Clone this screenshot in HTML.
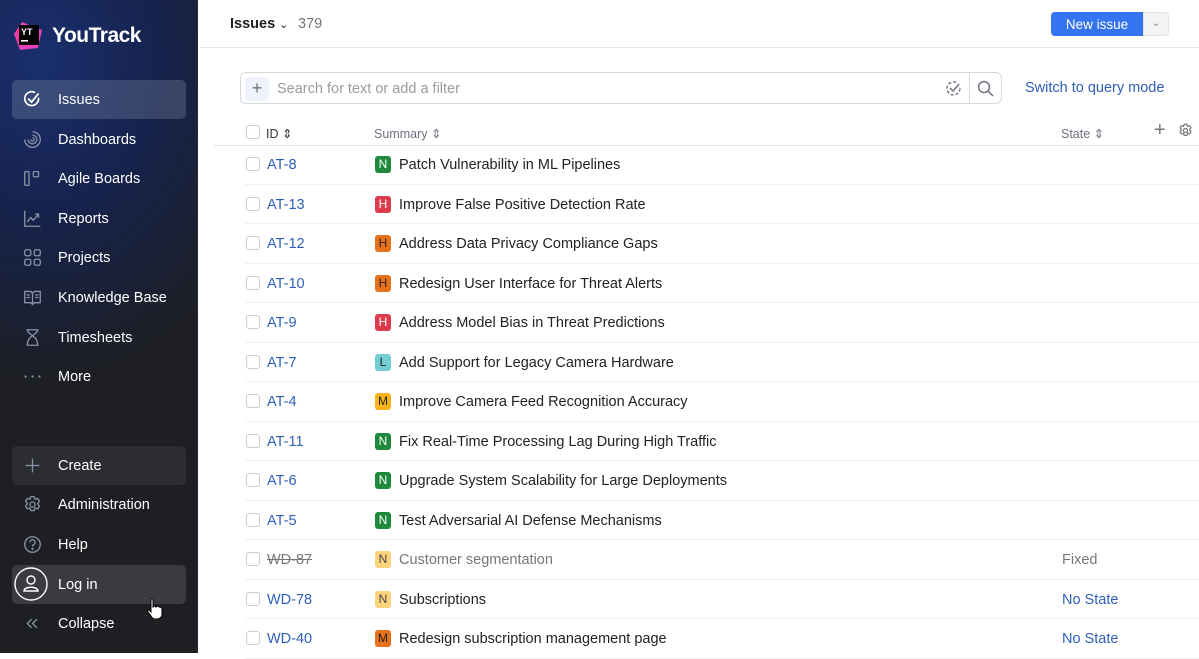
<!DOCTYPE html>
<html><head><meta charset="utf-8"><style>
*{box-sizing:border-box;margin:0;padding:0}
body{width:1199px;height:653px;overflow:hidden;font-family:"Liberation Sans",sans-serif;background:#fff;position:relative}
#sb{position:absolute;left:0;top:0;width:198px;height:653px;background:radial-gradient(ellipse 260px 330px at 40px 60px,#1a2f6e 0%,#16234d 45%,#1e1f22 100%);border-right:1px solid #2b2d30}
.logo{position:absolute;left:12px;top:20px}
.brand{position:absolute;left:52px;top:24px;color:#fff;font-size:21px;font-weight:bold;letter-spacing:-0.5px}
.nav{position:absolute;left:12px;width:174px;height:39px;border-radius:5px;color:#fff;font-size:14.5px;line-height:41px;padding-left:46px}
.nav.act{background:rgba(120,135,160,0.35)}
.nav.cr{background:#2b2d30}
.nav.lg{background:#393b40}
.nav svg{position:absolute;left:11px;top:10px}
#main{position:absolute;left:199px;top:0;right:0;height:653px}
.top{height:48px;border-bottom:1px solid #e6e7ea;position:relative}
.ti{position:absolute;left:31px;top:16px;font-size:14.5px;font-weight:bold;color:#222}
.cnt{position:absolute;left:100px;top:16px;font-size:14.5px;color:#777}
.btn{position:absolute;left:852px;top:12px;width:92px;height:24px;background:#3574f0;color:#fff;border-radius:4px 0 0 4px;font-size:13.5px;text-align:center;line-height:25px}
.btn2{position:absolute;left:944px;top:12px;width:26px;height:24px;background:#f2f3f5;border:1px solid #e3e4e7;border-radius:0 4px 4px 0;color:#888;font-size:10px;text-align:center;line-height:22px}
.search{position:absolute;left:41px;top:72px;width:762px;height:32px;border:1px solid #d6d8dc;border-radius:6px}
.plus{position:absolute;left:4px;top:4px;width:24px;height:24px;background:#eef2fb;border-radius:4px;color:#6b7280;font-size:18px;text-align:center;line-height:23px}
.ph{position:absolute;left:36px;top:8px;color:#9a9ca3;font-size:14.5px}
.sdiv{position:absolute;left:728px;top:0;width:1px;height:30px;background:#d6d8dc}
.sq{position:absolute;left:826px;top:80px;color:#2f5fb8;font-size:14.5px}
.hdr{position:absolute;left:15px;top:120px;width:985px;height:26px;border-bottom:1px solid #dfe1e5;font-size:12.5px;color:#6c707e}
.cb{position:absolute;width:14px;height:14px;border:1px solid #c9ccd1;border-radius:3px;background:#fff}
.row{position:absolute;left:46px;width:954px;height:39.5px;border-bottom:1px solid #eeeff1;font-size:14.5px}
.row .cb{left:1px;top:12px}
.id{position:absolute;left:22px;top:12px;color:#2f5fb8}
.bd{position:absolute;left:130px;top:11px;width:16px;height:17px;border-radius:3px;font-size:12px;text-align:center;line-height:17px}
.sm{position:absolute;left:154px;top:12px;color:#222}
.st{position:absolute;left:817px;top:12px;color:#2f5fb8}
</style></head><body>
<div id="sb">
<svg class="logo" width="32" height="32" viewBox="0 0 32 32"><polygon points="2,14 10,2 30,10 26,28 8,30" fill="#e83fbb"/><polygon points="6,22 4,10 20,6" fill="#ff318c"/><rect x="7" y="5" width="20" height="20" fill="#000"/><text x="9" y="15" fill="#fff" font-size="9" font-weight="bold" font-family="Liberation Sans">YT</text><rect x="9" y="20" width="7" height="1.6" fill="#fff"/></svg>
<div class="brand">YouTrack</div>
<div class="nav act" style="top:80px"><svg width="19" height="19" viewBox="0 0 22 22" fill="none" stroke="#fff" stroke-width="2"><path d="M18 9a8 8 0 1 1-4-6"/><path d="M6 10l4 4 8-10"/></svg>Issues</div>
<div class="nav" style="top:120px"><svg width="19" height="19" viewBox="0 0 22 22" fill="none" stroke="#8a93a8" stroke-width="1.5"><path d="M11 2a9 9 0 1 1-9 9"/><path d="M11 6a5 5 0 1 1-5 5"/><path d="M11 9a2 2 0 1 1-2 2"/></svg>Dashboards</div>
<div class="nav" style="top:159px"><svg width="19" height="19" viewBox="0 0 22 22" fill="none" stroke="#8a93a8" stroke-width="1.5"><rect x="2" y="3" width="5" height="16" rx="1"/><rect x="12" y="3" width="6" height="6" rx="1"/></svg>Agile Boards</div>
<div class="nav" style="top:199px"><svg width="19" height="19" viewBox="0 0 22 22" fill="none" stroke="#8a93a8" stroke-width="1.5"><path d="M2 2v18h18"/><path d="M5 15l4-5 3 3 6-7M14 6h4v4"/></svg>Reports</div>
<div class="nav" style="top:238px"><svg width="19" height="19" viewBox="0 0 22 22" fill="none" stroke="#8a93a8" stroke-width="1.5"><rect x="2" y="2" width="7" height="7" rx="2"/><rect x="13" y="2" width="7" height="7" rx="2"/><rect x="2" y="13" width="7" height="7" rx="2"/><rect x="13" y="13" width="7" height="7" rx="2"/></svg>Projects</div>
<div class="nav" style="top:278px"><svg width="19" height="19" viewBox="0 0 22 22" fill="none" stroke="#8a93a8" stroke-width="1.5"><path d="M2 4h7l2 2 2-2h7v13h-7l-2 2-2-2H2z M11 6v13 M4 8h4M4 11h4M14 8h4M14 11h4"/></svg>Knowledge Base</div>
<div class="nav" style="top:318px"><svg width="19" height="19" viewBox="0 0 22 22" fill="none" stroke="#8a93a8" stroke-width="1.5"><path d="M4 2h14M4 20h14M5 2c0 6 12 6 12 18M17 2c0 6-12 6-12 18"/></svg>Timesheets</div>
<div class="nav" style="top:357px"><svg width="19" height="19" viewBox="0 0 22 22" fill="#8a93a8"><circle cx="3" cy="11" r="1.3"/><circle cx="11" cy="11" r="1.3"/><circle cx="19" cy="11" r="1.3"/></svg>More</div>
<div class="nav cr" style="top:446px"><svg width="19" height="19" viewBox="0 0 22 22" fill="none" stroke="#8a93a8" stroke-width="1.5"><path d="M11 3v16M3 11h16"/></svg>Create</div>
<div class="nav" style="top:485px"><svg width="19" height="19" viewBox="0 0 22 22" fill="none" stroke="#8a93a8" stroke-width="1.5"><circle cx="11" cy="11" r="3"/><path d="M9 2h4l1 3 3-1 2 3-2 3 2 3-2 3-3-1-1 3H9l-1-3-3 1-2-3 2-3-2-3 2-3 3 1z"/></svg>Administration</div>
<div class="nav" style="top:525px"><svg width="19" height="19" viewBox="0 0 22 22" fill="none" stroke="#8a93a8" stroke-width="1.5"><circle cx="11" cy="11" r="9"/><path d="M8 8.5a3 3 0 1 1 4 2.8c-1 .4-1 1-1 2.2"/><circle cx="11" cy="16" r=".6"/></svg>Help</div>
<div class="nav lg" style="top:565px"><svg style="left:2px;top:2px" width="34" height="34" viewBox="0 0 34 34" fill="none" stroke="#fff" stroke-width="1.4"><circle cx="17" cy="17" r="16"/><circle cx="17" cy="13" r="4"/><path d="M10 24c0-5 14-5 14 0z"/></svg>Log in</div>
<div class="nav" style="top:604px"><svg width="19" height="19" viewBox="0 0 22 22" fill="none" stroke="#8a93a8" stroke-width="1.5"><path d="M10 6l-5 5 5 5M16 6l-5 5 5 5"/></svg>Collapse</div>
<svg style="position:absolute;left:146px;top:597px" width="18" height="22" viewBox="0 0 18 22"><path d="M5 2c1-1 2 0 2 1v7l1-1c1 0 2 0 2 1l1-1c1 0 2 1 2 1l1 0c1 0 2 1 2 2v5c0 3-2 5-5 5H9c-2 0-3-1-4-3l-3-4c-1-1 0-2 1-2l2 2z" fill="#fff" stroke="#000"/></svg>
</div>
<div id="main">
<div class="top"><div class="ti">Issues <span style="font-weight:normal;font-size:11px">&#8964;</span></div><div class="cnt" style="left:99px">379</div>
<div class="btn">New issue</div><div class="btn2">&#8964;</div></div>
<div class="search"><div class="plus">+</div><div class="ph">Search for text or add a filter</div>
<svg style="position:absolute;left:704px;top:7px" width="17" height="17" viewBox="0 0 17 17" fill="none" stroke="#6c707e" stroke-width="1.4"><path d="M15 8.5a6.5 6.5 0 1 1-3-5.5" stroke-dasharray="3 2"/><path d="M5 8l3 3 6-7"/></svg>
<div class="sdiv"></div>
<svg style="position:absolute;left:736px;top:7px" width="17" height="17" viewBox="0 0 17 17" fill="none" stroke="#6c707e" stroke-width="1.4"><circle cx="7" cy="7" r="5.5"/><path d="M11 11l5 5"/></svg></div>
<div class="sq">Switch to query mode</div>
<div class="hdr"><div class="cb" style="left:32px;top:5px"></div><span style="position:absolute;left:52px;top:6px;color:#333">ID ⇕</span><span style="position:absolute;left:160px;top:6px">Summary ⇕</span><span style="position:absolute;left:847px;top:6px">State ⇕</span><span style="position:absolute;left:940px;top:-1px;font-size:20px;color:#777">+</span><svg style="position:absolute;left:964px;top:3px" width="15" height="15" viewBox="0 0 22 22" fill="none" stroke="#777" stroke-width="1.8"><circle cx="11" cy="11" r="3"/><path d="M9 2h4l1 3 3-1 2 3-2 3 2 3-2 3-3-1-1 3H9l-1-3-3 1-2-3 2-3-2-3 2-3 3 1z"/></svg></div>
<div class="row" style="top:145px"><div class="cb"></div><div class="id">AT-8</div><div class="bd" style="background:#208a3c;color:#fff">N</div><div class="sm">Patch Vulnerability in ML Pipelines</div></div>
<div class="row" style="top:184.5px"><div class="cb"></div><div class="id">AT-13</div><div class="bd" style="background:#db3b4b;color:#fff">H</div><div class="sm">Improve False Positive Detection Rate</div></div>
<div class="row" style="top:224px"><div class="cb"></div><div class="id">AT-12</div><div class="bd" style="background:#e8711b;color:#222">H</div><div class="sm">Address Data Privacy Compliance Gaps</div></div>
<div class="row" style="top:263.5px"><div class="cb"></div><div class="id">AT-10</div><div class="bd" style="background:#e8711b;color:#222">H</div><div class="sm">Redesign User Interface for Threat Alerts</div></div>
<div class="row" style="top:303px"><div class="cb"></div><div class="id">AT-9</div><div class="bd" style="background:#db3b4b;color:#fff">H</div><div class="sm">Address Model Bias in Threat Predictions</div></div>
<div class="row" style="top:342.5px"><div class="cb"></div><div class="id">AT-7</div><div class="bd" style="background:#73cdd3;color:#222">L</div><div class="sm">Add Support for Legacy Camera Hardware</div></div>
<div class="row" style="top:382px"><div class="cb"></div><div class="id">AT-4</div><div class="bd" style="background:#fbb315;color:#222">M</div><div class="sm">Improve Camera Feed Recognition Accuracy</div></div>
<div class="row" style="top:421.5px"><div class="cb"></div><div class="id">AT-11</div><div class="bd" style="background:#208a3c;color:#fff">N</div><div class="sm">Fix Real-Time Processing Lag During High Traffic</div></div>
<div class="row" style="top:461px"><div class="cb"></div><div class="id">AT-6</div><div class="bd" style="background:#208a3c;color:#fff">N</div><div class="sm">Upgrade System Scalability for Large Deployments</div></div>
<div class="row" style="top:500.5px"><div class="cb"></div><div class="id">AT-5</div><div class="bd" style="background:#208a3c;color:#fff">N</div><div class="sm">Test Adversarial AI Defense Mechanisms</div></div>
<div class="row" style="top:540px"><div class="cb"></div><div class="id" style="color:#777;text-decoration:line-through">WD-87</div><div class="bd" style="background:#fdd27a;color:#444">N</div><div class="sm" style="color:#777">Customer segmentation</div><div class="st" style="color:#777">Fixed</div></div>
<div class="row" style="top:579.5px"><div class="cb"></div><div class="id">WD-78</div><div class="bd" style="background:#fdd27a;color:#444">N</div><div class="sm">Subscriptions</div><div class="st">No State</div></div>
<div class="row" style="top:619px"><div class="cb"></div><div class="id">WD-40</div><div class="bd" style="background:#e8711b;color:#222">M</div><div class="sm">Redesign subscription management page</div><div class="st">No State</div></div>
</div>
</body></html>
